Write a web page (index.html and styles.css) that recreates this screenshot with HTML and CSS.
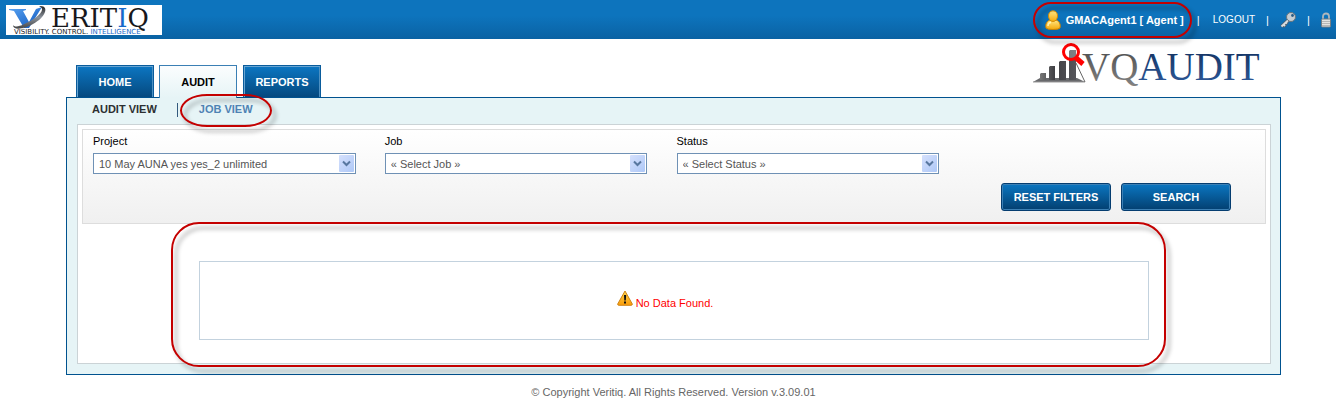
FILE: index.html
```html
<!DOCTYPE html>
<html lang="en">
<head>
<meta charset="utf-8">
<title>VQ Audit - Job View</title>
<link rel="stylesheet" href="styles.css">
</head>
<body>
<header class="topbar">
  <a class="brand" href="#" aria-label="Veritiq">
    <svg width="156" height="30" viewBox="0 0 156 30">
      <defs>
        <linearGradient id="vg" x1="0" y1="0" x2="1" y2="1"><stop offset="0" stop-color="#5aa4f2"/><stop offset="1" stop-color="#0d56bd"/></linearGradient>
        <linearGradient id="sw" x1="0" y1="0" x2="0" y2="1"><stop offset="0" stop-color="#222"/><stop offset=".5" stop-color="#8b929b"/><stop offset="1" stop-color="#444"/></linearGradient>
      </defs>
      <path d="M3 4H20V5L17 6L23 17L30 4L36 2L23 23H18L8 6L3 5Z" fill="url(#vg)"/>
      <path d="M33 1C44 0 40 12 27 19C18 24 7 26 7 20C10 24 19 19 26 15C36 9 39 3 33 1Z" fill="url(#sw)"/>
      <text class="brand-name" x="45" y="22">ERIT<tspan class="brand-blue">I</tspan>Q</text>
      <text class="brand-tag" x="8" y="29">VISIBILITY. CONTROL. <tspan class="brand-blue">INTELLIGENCE</tspan></text>
    </svg>
  </a>
  <nav class="account" aria-label="Account">
    <a class="user marked" href="#">
      <svg width="16" height="20" viewBox="0 0 16 20">
        <defs><linearGradient id="ug" x1="0" y1="0" x2="0" y2="1"><stop offset="0" stop-color="#ffe783"/><stop offset="1" stop-color="#f5a90b"/></linearGradient></defs>
        <path d="M1 18C0 14 2 11 5 10H11C14 11 16 14 15 18Q14 19.500 8 19.500T1 18Z" fill="url(#ug)" stroke="#c98205"/>
        <path d="M8 .8C14.500 .8 13.500 11.500 8 11.500S1.500 .8 8 .8Z" fill="url(#ug)" stroke="#d28c08"/>
        <path d="M3 16C3 13 5 12.500 6 12.500" fill="none" stroke="#fff3b5" stroke-width="1.500"/>
      </svg>
      <span>GMACAgent1 [ Agent ]</span>
    </a>
    <span class="bar bar-wide">|</span>
    <a class="logout" href="#">LOGOUT</a>
    <span class="bar">|</span>
    <a class="icon" href="#" aria-label="Change password">
      <svg width="16" height="16" viewBox="0 0 16 16">
        <path d="M9.500 7L1.500 14.500M3.500 12.500L5.500 14.500M6 10.500L7.500 12" stroke="#53606c" stroke-width="3.200" fill="none"/>
        <path d="M9.500 7L1.500 14.500M3.500 12.500L5 14M6 10.500L7 11.500" stroke="#d7dde1" stroke-width="1.800" fill="none"/>
        <circle cx="11" cy="5" r="4.500" fill="#c5cdd3" stroke="#68747d"/>
        <circle cx="12.500" cy="3.500" r="1.400" fill="#285a84"/>
      </svg>
    </a>
    <span class="bar">|</span>
    <a class="icon" href="#" aria-label="Lock">
      <svg width="10" height="16" viewBox="0 0 10 16">
        <path d="M2 8V4.500C2 .5 8 .5 8 4.500V8" fill="none" stroke="#aeb6bc" stroke-width="1.800"/>
        <rect x=".5" y="7" width="9" height="8" rx="1" fill="#e4e4e1" stroke="#777f84"/>
        <path d="M1 9.500H9M1 11.500H9M1 13.500H9" stroke="#a3a5a5" stroke-width=".7"/>
      </svg>
    </a>
  </nav>
</header>

<div class="page">
  <div class="masthead">
    <nav class="tabs" aria-label="Main">
      <a class="tab" href="#">HOME</a>
      <a class="tab tab-active" href="#" aria-current="page">AUDIT</a>
      <a class="tab" href="#">REPORTS</a>
    </nav>
    <svg class="product" width="230" height="52" viewBox="0 0 230 52" role="img" aria-label="VQ Audit">
      <defs>
        <linearGradient id="gv" x1="0" y1="0" x2="0" y2="1"><stop offset=".2" stop-color="#555"/><stop offset="1" stop-color="#858585"/></linearGradient>
        <linearGradient id="ga" x1="0" y1="0" x2="0" y2="1"><stop offset=".2" stop-color="#173768"/><stop offset="1" stop-color="#315d9f"/></linearGradient>
        <linearGradient id="gb" x1="0" y1="0" x2="1" y2="0"><stop offset="0" stop-color="#777"/><stop offset=".4" stop-color="#414145"/><stop offset="1" stop-color="#55555a"/></linearGradient>
      </defs>
      <path d="M0 39L7 35H44L52 39Z" fill="#68696c"/>
      <path d="M0 39H52" stroke="#999"/>
      <path d="M7 31L8 30H13V37H7ZM16 24L17 23H22V37H16ZM26 19L27 18H33V37H26ZM36 8L37 7H43V37H36Z" fill="url(#gb)"/>
      <path d="M43 20L52 39" stroke="#666" fill="none"/>
      <path d="M42 14L50 21" stroke="#f00" stroke-width="5" />
      <circle cx="38" cy="9" r="7.500" fill="#fff" fill-opacity=".25" stroke="#f00" stroke-width="3"/>
      <text class="product-name" x="49" y="37" fill="url(#gv)">VQ<tspan fill="url(#ga)">AUDIT</tspan></text>
    </svg>
  </div>

  <main class="panel">
    <nav class="subnav" aria-label="Audit">
      <a class="sub" href="#">AUDIT VIEW</a>
      <a class="sub sub-active marked" href="#" aria-current="page">JOB VIEW</a>
    </nav>
    <div class="content">
      <form class="filters">
        <div class="fields">
          <div class="field">
            <label for="project">Project</label>
            <div class="picker">
              <select id="project"><option>10 May AUNA yes yes_2 unlimited</option></select>
              <span class="arrow"><svg width="9" height="7" viewBox="0 0 9 7"><path d="M1 1.500L4.500 5L8 1.500" /></svg></span>
            </div>
          </div>
          <div class="field">
            <label for="job">Job</label>
            <div class="picker">
              <select id="job"><option>« Select Job »</option></select>
              <span class="arrow"><svg width="9" height="7" viewBox="0 0 9 7"><path d="M1 1.500L4.500 5L8 1.500" /></svg></span>
            </div>
          </div>
          <div class="field">
            <label for="status">Status</label>
            <div class="picker">
              <select id="status"><option>« Select Status »</option></select>
              <span class="arrow"><svg width="9" height="7" viewBox="0 0 9 7"><path d="M1 1.500L4.500 5L8 1.500" /></svg></span>
            </div>
          </div>
        </div>
        <div class="actions">
          <button class="btn" type="reset">RESET FILTERS</button>
          <button class="btn" type="button">SEARCH</button>
        </div>
      </form>
      <div class="results marked">
        <svg width="16" height="16" viewBox="0 0 16 16">
          <defs><linearGradient id="wg" x1="0" y1="0" x2="0" y2="1"><stop offset="0" stop-color="#ffd84f"/><stop offset="1" stop-color="#f99b08"/></linearGradient></defs>
          <path d="M8 1L15.300 14Q15.500 15.300 14 15.300H2Q.5 15.300 .7 14Z" fill="url(#wg)" stroke="#cf8416"/>
          <path d="M7 5H9.200L8.800 10.500H7.300ZM7 11.500H9V13.500H7Z" fill="#111"/>
        </svg>
        <span>No Data Found.</span>
      </div>
    </div>
  </main>
  <footer class="footer">© Copyright Veritiq. All Rights Reserved. Version v.3.09.01</footer>
</div>
</body>
</html>
```
FILE: styles.css
```css
* { box-sizing: border-box; }
body {
  margin: 0;
  background: #fff;
  color: #000;
  font: 11px/14px "Liberation Sans", Arial, sans-serif;
}
a { color: inherit; text-decoration: none; }
svg { display: block; flex: none; overflow: visible; }

.topbar {
  display: flex;
  justify-content: space-between;
  align-items: center;
  height: 39px;
  padding: 0 5px 0 6px;
  background: linear-gradient(#0d74bd 40%, #0a62a3);
  color: #fff;
}
.brand { background: #fff; }
.brand-name { font: 26px "DejaVu Serif", serif; fill: #17181c; }
.brand-tag { font: 7px "DejaVu Sans", sans-serif; fill: #222; }
.brand-name .brand-blue, .brand-tag .brand-blue { fill: #1769c9; }
.account { display: flex; align-items: center; }
.user { display: flex; align-items: center; gap: 5px; font-weight: bold; }
.logout { font-size: 10px; }
.bar { width: 25px; text-align: center; }
.bar-wide { width: 29px; }

/* Red call-out rings */
.marked { position: relative; }
.marked::after {
  content: "";
  position: absolute;
  border: 2px solid #c40000;
  filter: drop-shadow(4px 5px 2px rgba(0, 0, 0, .35));
  pointer-events: none;
  z-index: 2;
}
.user::after { inset: -8px -8px -8px -12px; border-radius: 18px; }
.sub-active::after { inset: -8px -19px -11px; border-radius: 28px / 17px; }
.results::after { inset: -40px -18px -28px -29px; border-radius: 28px; }

.page { padding: 0 55px 0 66px; }
.masthead {
  display: flex;
  justify-content: space-between;
  align-items: flex-end;
  height: 58px;
  padding: 0 18px 0 10px;
}
.product { align-self: flex-start; margin-top: 4px; }
.product-name { font: 39px "Liberation Serif", serif; }
.tabs { display: flex; gap: 6px; }
.tab {
  min-width: 78px;
  padding: 9px 10px 8px;
  border: 1px solid #0a5c9c;
  border-bottom: 0;
  background: linear-gradient(#0c76c2, #05497f);
  box-shadow: inset 1px 1px #68a5d2, inset -1px 0 #4f91c2;
  color: #fff;
  font-weight: bold;
  text-align: center;
}
.tab-active {
  z-index: 1;
  margin: 0 0 -1px -1px;
  border-color: #3a7fb4;
  background: linear-gradient(#fbfdfe, #e6f4f6);
  box-shadow: none;
  color: #000;
}

.panel {
  padding: 0 9px 10px 10px;
  border: 1px solid #00528f;
  background: #e6f4f6;
}
.subnav { display: flex; padding: 4px 0 8px 15px; font-weight: bold; }
.sub { color: #2c2f31; }
.sub-active { margin-left: 42px; color: #4f83b4; }
.sub-active::before {
  content: "";
  position: absolute;
  left: -22px;
  top: 1px;
  height: 14px;
  border-left: 1px solid #33597d;
}
.content { padding: 4px 4px 23px; border: 1px solid #cbd3d6; background: #fff; }
.filters {
  padding: 4px 5px 12px 10px;
  border: 1px solid #ddd;
  background: linear-gradient(#fff, #f0f0f0);
}
.fields { display: grid; grid-template-columns: repeat(4, 1fr); }
.field label { display: block; margin-bottom: 5px; }
.picker { display: grid; width: 90%; }
.picker select {
  grid-area: 1 / 1;
  height: 21px;
  padding: 0 20px 0 5px;
  border: 1px solid #6f91b5;
  border-radius: 0;
  appearance: none;
  background: #fff;
  color: #555;
  font: inherit;
}
.arrow {
  grid-area: 1 / 1;
  place-self: center end;
  display: grid;
  place-items: center;
  width: 15px;
  height: 17px;
  margin-right: 2px;
  border-radius: 1px;
  background: linear-gradient(135deg, #d5e0fc, #aec8f7);
  pointer-events: none;
}
.arrow path { fill: none; stroke: #58779f; stroke-width: 2; }
.actions { display: flex; justify-content: flex-end; gap: 10px; margin-top: 9px; padding-right: 29px; }
.btn {
  width: 110px;
  height: 28px;
  padding: 0;
  border: 1px solid #053d70;
  border-radius: 3px;
  background: linear-gradient(#0b76c1, #033f70);
  box-shadow: inset 0 0 0 1px #3c80b5;
  color: #fff;
  font: bold 11px/14px "Liberation Sans", Arial, sans-serif;
}
.results {
  display: flex;
  justify-content: center;
  align-items: center;
  gap: 3px;
  width: 81%;
  max-width: 950px;
  height: 79px;
  margin: 37px auto 0;
  padding: 0 18px 2px 0;
  border: 1px solid #c3d2de;
  color: #f00;
}
.results span { padding-top: 6px; }
.results svg { margin-bottom: 3px; }
.footer { padding-top: 10px; color: #666; text-align: center; }
```
